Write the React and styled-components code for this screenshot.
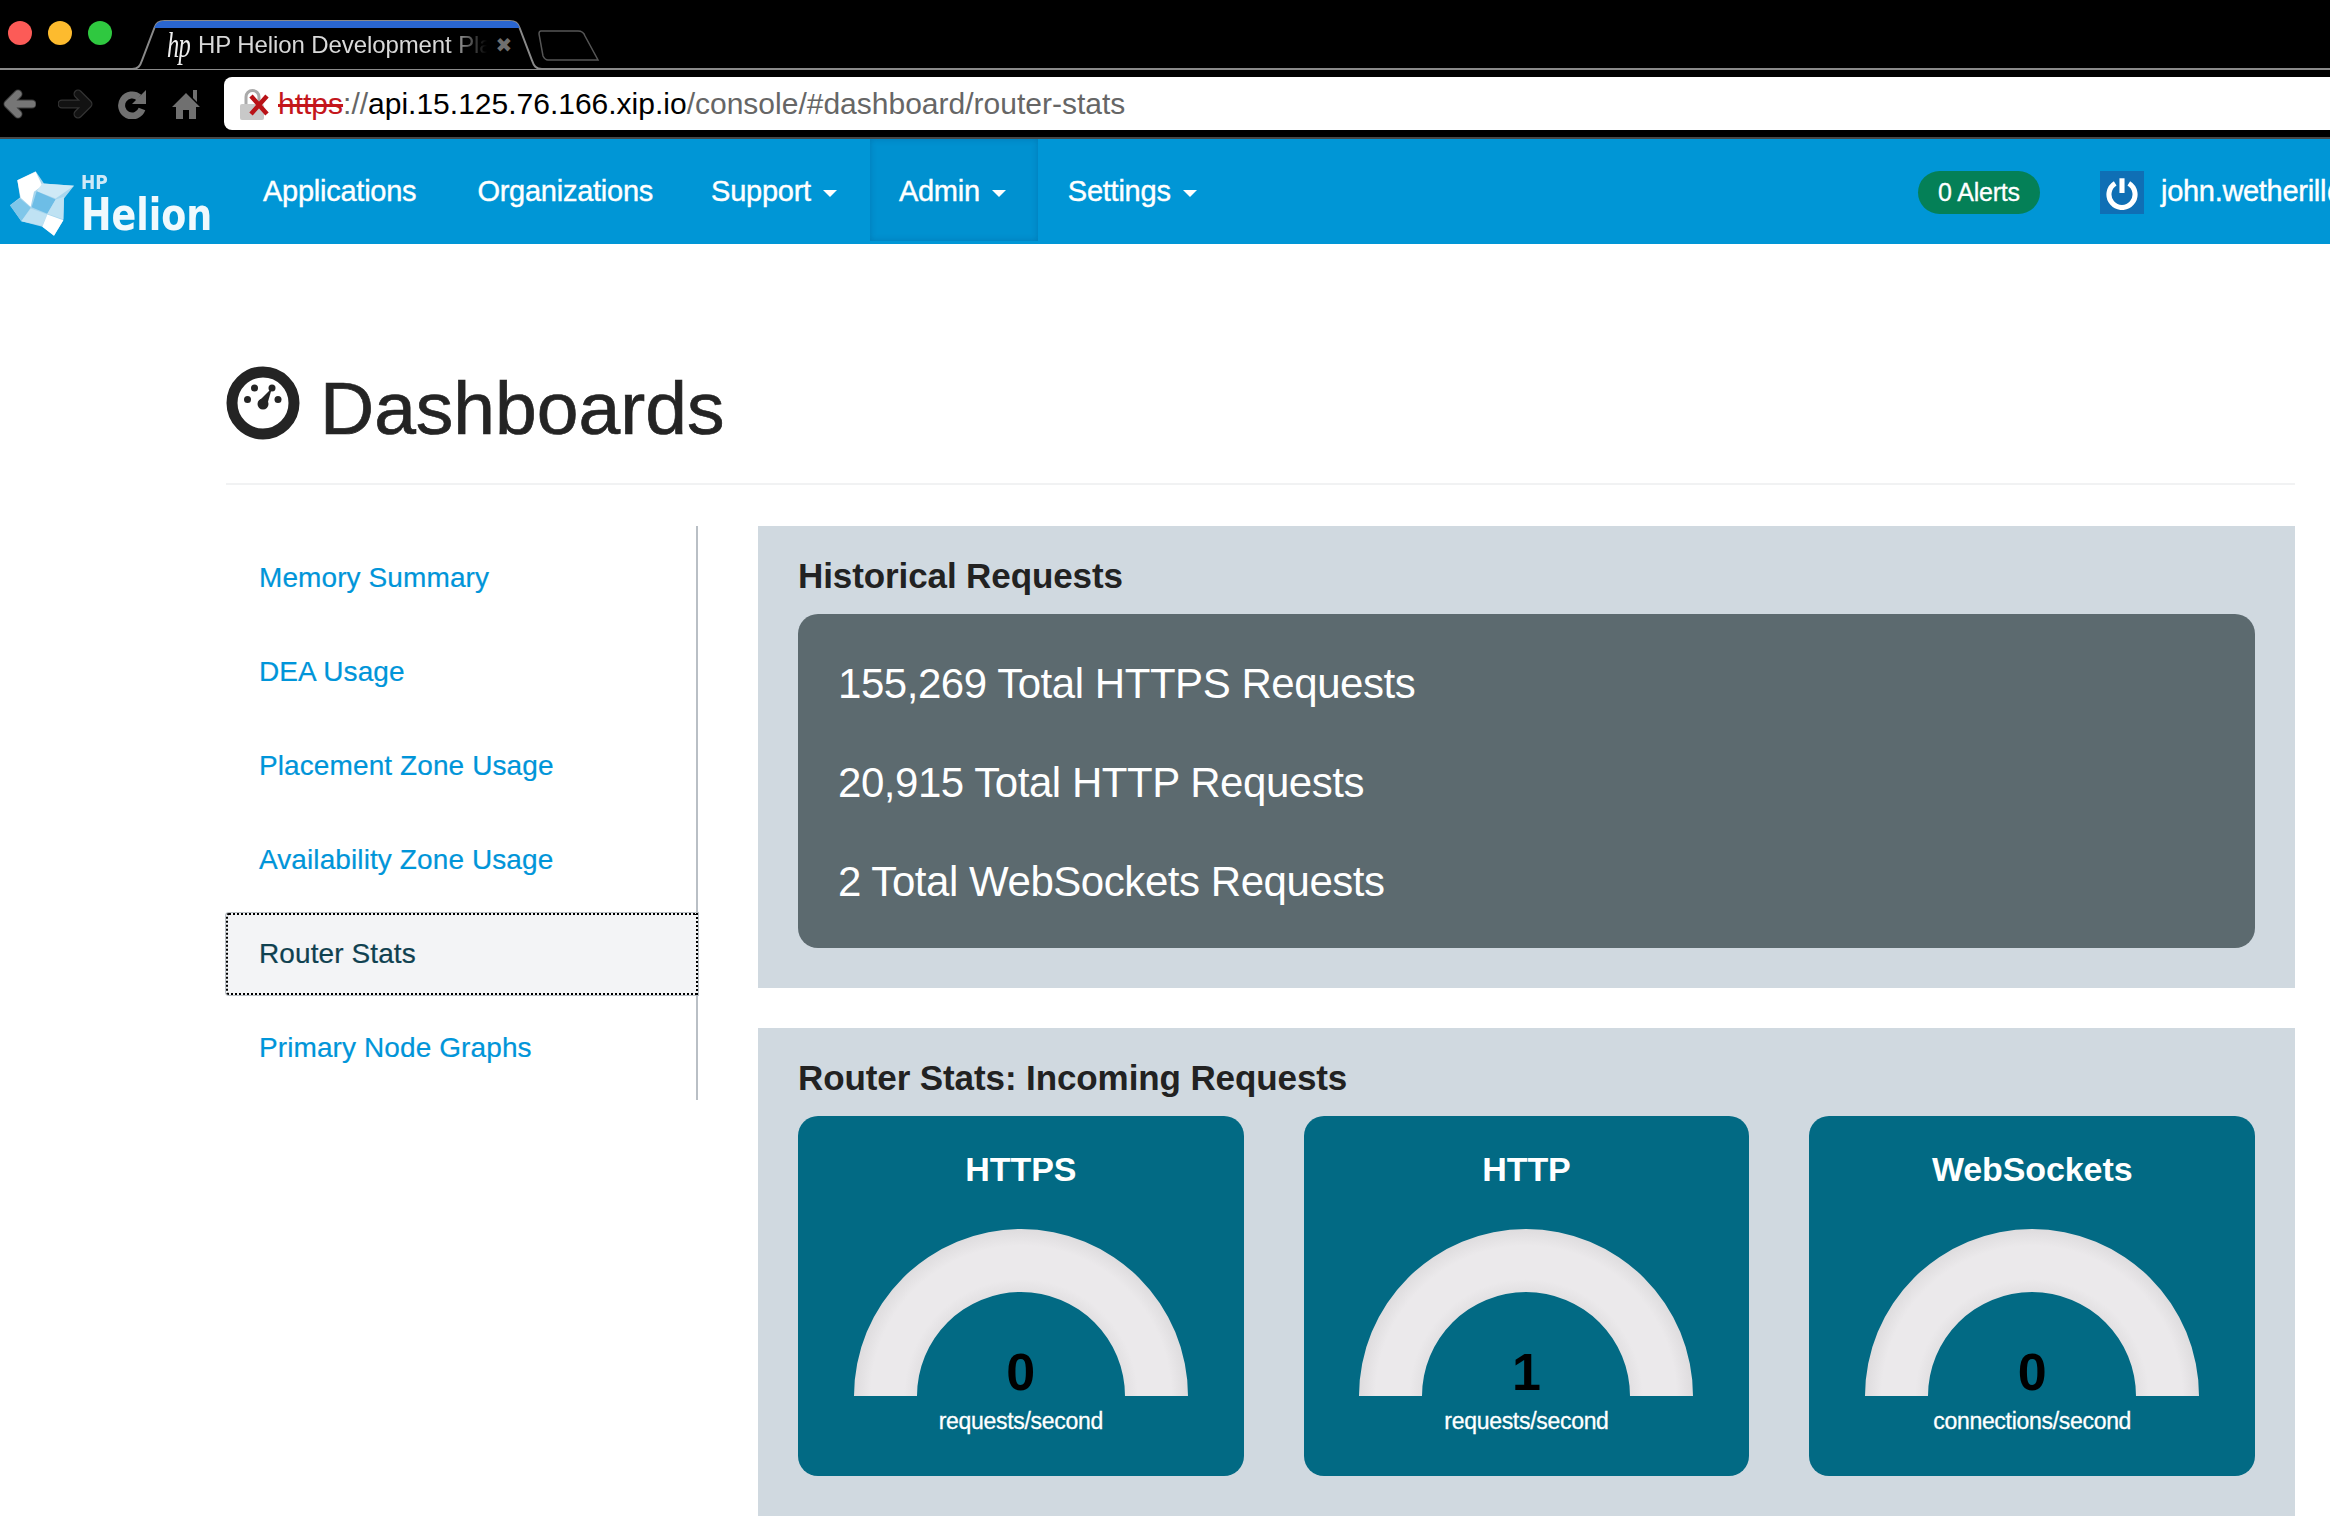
import styled, { createGlobalStyle } from 'styled-components'

const GlobalStyle = createGlobalStyle`
  html, body {
    margin: 0;
    padding: 0;
    background: #fff;
    font-family: "Liberation Sans", Arial, sans-serif;
    overflow: hidden;
  }
  * { box-sizing: border-box; }
`

const MENU = [
  { label: 'Memory Summary' },
  { label: 'DEA Usage' },
  { label: 'Placement Zone Usage' },
  { label: 'Availability Zone Usage' },
  { label: 'Router Stats', active: true },
  { label: 'Primary Node Graphs' },
]

const GAUGES = [
  { title: 'HTTPS', value: 0, unit: 'requests/second' },
  { title: 'HTTP', value: 1, unit: 'requests/second' },
  { title: 'WebSockets', value: 0, unit: 'connections/second' },
]

const BrowserChrome = () => (
  <Chrome>
    <TabStrip>
      <Lights>
        <Light $color="#fc5b57" />
        <Light $color="#fdbb2e" />
        <Light $color="#2fc840" />
      </Lights>
      <Tab>
        <TabShape viewBox="0 0 408 50" preserveAspectRatio="none">
          <path d="M0 49 H2 C8 49 10 46 12 40 L24 8 C26 3 28 1 34 1 H374 C380 1 382 3 384 8 L396 40 C398 46 400 49 406 49 H408" fill="#000" stroke="#8a8a8a" strokeWidth="2" />
          <path d="M24 8 C26 3 28 1 34 1 H374 C380 1 382 3 384 8 Z" fill="#2a66d0" />
        </TabShape>
        <HpMark>hp</HpMark>
        <TabTitle>HP Helion Development Pla</TabTitle>
        <TabClose>✖</TabClose>
      </Tab>
      <NewTab viewBox="0 0 62 32">
        <path d="M3 1 H40 C44 1 46 3 47 6 L60 30 H10 C7 30 6 28 5 26 L1 4 C1 2 2 1 3 1 Z" fill="none" stroke="#555" strokeWidth="1.5" />
      </NewTab>
    </TabStrip>
    <UrlRow>
      <NavIcons>
        <ChromeIcon viewBox="0 0 33 30" $w={33}>
          <path d="M29 15 H7 M15 5 L5 15 L15 25" fill="none" stroke="#3a3a3a" strokeWidth="9" strokeLinecap="round" strokeLinejoin="round" />
          <path d="M29 15 H7 M15 5 L5 15 L15 25" fill="none" stroke="#767676" strokeWidth="7" strokeLinecap="round" strokeLinejoin="round" />
        </ChromeIcon>
        <ChromeIcon viewBox="0 0 37 30" $w={37}>
          <path d="M4 15 H28 M20 5 L30 15 L20 25" fill="none" stroke="#333" strokeWidth="9" strokeLinecap="round" strokeLinejoin="round" />
          <path d="M4 15 H28 M20 5 L30 15 L20 25" fill="none" stroke="#121212" strokeWidth="6.5" strokeLinecap="round" strokeLinejoin="round" />
        </ChromeIcon>
        <ChromeIcon viewBox="0 0 33 30" $w={33}>
          <path d="M22 8.5 A10.5 10.5 0 1 0 25 20" fill="none" stroke="#707070" strokeWidth="7" />
          <path d="M29 1 V15 H15 Z" fill="#707070" />
        </ChromeIcon>
        <ChromeIcon viewBox="0 0 28 30" $w={28}>
          <path d="M14 4 L28 18 H24 V30 H17 V21 H11 V30 H4 V18 H0 Z M21 1 H25 V13 L21 9 Z" fill="#707070" />
        </ChromeIcon>
      </NavIcons>
      <UrlBar>
        <LockIcon viewBox="0 0 30 34">
          <path d="M6 18 V10 A6.5 6.5 0 0 1 19 10 V18" fill="none" stroke="#aaa" strokeWidth="3" />
          <rect x="0" y="17" width="24" height="16" rx="2" fill="#c8c8c8" />
          <path d="M11 9 L27 27 M27 9 L11 27" stroke="#b91217" strokeWidth="4.5" />
        </LockIcon>
        <UrlText>
          <Scheme>https</Scheme>
          <UrlDim>://</UrlDim>
          <span>api.15.125.76.166.xip.io</span>
          <UrlDim>/console/#dashboard/router-stats</UrlDim>
        </UrlText>
      </UrlBar>
    </UrlRow>
  </Chrome>
)

const HelionLogo = () => (
  <Logo>
    <LogoMark width="66" height="67" viewBox="25 65 198 200">
      <path d="M105 68 L130 105 L220 112 L190 150 L188 215 L160 262 L125 235 L62 218 L28 170 L58 147 L50 95 Z" fill="#a8d6ee" />
      <path d="M50 95 L105 70 L125 112 L100 130 L90 175 L60 148 Z" fill="#ffffff" />
      <path d="M125 105 L220 112 L165 150 L108 128 Z" fill="#cfe9f6" />
      <path d="M108 128 L165 153 L140 196 L93 176 Z" fill="#6dbde6" />
      <path d="M165 153 L190 145 L188 212 L140 196 Z" fill="#bfe2f3" />
      <path d="M28 170 L58 150 L90 178 L62 218 Z" fill="#7fc6e9" />
      <path d="M90 180 L140 198 L125 232 L62 218 Z" fill="#bfe2f3" />
      <path d="M140 198 L188 215 L160 262 L125 235 Z" fill="#ffffff" />
    </LogoMark>
    <LogoWords>
      <LogoHp>HP</LogoHp>
      <LogoName>Helion</LogoName>
    </LogoWords>
  </Logo>
)

const TopNav = () => (
  <NavBar>
    <HelionLogo />
    <NavItem $left={30} $right={31}>Applications</NavItem>
    <NavItem $left={30} $right={28}>Organizations</NavItem>
    <NavItem $left={30} $right={33}>Support<Caret /></NavItem>
    <NavItem $left={29} $right={32} $active>Admin<Caret /></NavItem>
    <NavItem $left={30} $right={30}>Settings<Caret /></NavItem>
    <NavRight>
      <AlertBadge>0 Alerts</AlertBadge>
      <PowerBox>
        <svg width="34" height="34" viewBox="0 0 30 30">
          <path d="M9 6.5 A11.5 11.5 0 1 0 21 6.5" fill="none" stroke="#fff" strokeWidth="4.5" />
          <path d="M15 2 V15" stroke="#fff" strokeWidth="4.5" />
        </svg>
      </PowerBox>
      <UserName>john.wetherill@hp.com</UserName>
    </NavRight>
  </NavBar>
)

const GaugeDial = () => (
  <svg width="334" height="167" viewBox="0 0 334 167">
    <defs>
      <radialGradient id="dial" gradientUnits="userSpaceOnUse" cx="167" cy="167" r="167">
        <stop offset="0.62" stopColor="#e2e0e2" />
        <stop offset="0.7" stopColor="#ebe9eb" />
        <stop offset="0.9" stopColor="#ebe9eb" />
        <stop offset="1" stopColor="#dedcde" />
      </radialGradient>
    </defs>
    <path d="M0 167 A167 167 0 0 1 334 167 H271 A104 104 0 0 0 63 167 Z" fill="url(#dial)" />
  </svg>
)

const GaugeCard = ({ title, value, unit }) => (
  <Card>
    <CardTitle>{title}</CardTitle>
    <DialWrap>
      <GaugeDial />
      <GaugeValue>{value}</GaugeValue>
    </DialWrap>
    <GaugeUnit>{unit}</GaugeUnit>
  </Card>
)

const App = () => (
  <>
    <GlobalStyle />
    <BrowserChrome />
    <TopNav />
    <Page>
      <PageHeader>
        <svg width="74" height="74" viewBox="0 0 74 74">
          <circle cx="37" cy="37" r="31" fill="none" stroke="#242424" strokeWidth="11" />
          <circle cx="21.5" cy="33.5" r="3.5" fill="#242424" />
          <circle cx="28.5" cy="22" r="3.5" fill="#242424" />
          <circle cx="46" cy="22" r="3.5" fill="#242424" />
          <circle cx="52" cy="33.5" r="3.5" fill="#242424" />
          <circle cx="37" cy="38" r="5.5" fill="#242424" />
          <path d="M33 35 L46 22 L41 39 Z" fill="#242424" />
        </svg>
        <PageTitle>Dashboards</PageTitle>
      </PageHeader>
      <Columns>
        <SideMenu>
          {MENU.map((item) => (
            <MenuItem key={item.label} $active={item.active}>{item.label}</MenuItem>
          ))}
        </SideMenu>
        <Panels>
          <Panel>
            <PanelTitle>Historical Requests</PanelTitle>
            <TotalsBox>
              <TotalRow>155,269 Total HTTPS Requests</TotalRow>
              <TotalRow>20,915 Total HTTP Requests</TotalRow>
              <TotalRow>2 Total WebSockets Requests</TotalRow>
            </TotalsBox>
          </Panel>
          <Panel>
            <PanelTitle>Router Stats: Incoming Requests</PanelTitle>
            <CardGrid>
              {GAUGES.map((gauge) => (
                <GaugeCard key={gauge.title} {...gauge} />
              ))}
            </CardGrid>
          </Panel>
        </Panels>
      </Columns>
    </Page>
  </>
)

const Chrome = styled.div`
  background: #000;
  height: 139px;
  overflow: hidden;
  border-bottom: 2px solid #4a4a4a;
`

const TabStrip = styled.div`
  height: 70px;
  display: flex;
  align-items: flex-start;
  border-bottom: 2px solid #8a8a8a;
`

const Lights = styled.div`
  display: flex;
  gap: 16px;
  padding: 21px 0 0 8px;
  width: 130px;
  flex: none;
`

const Light = styled.span`
  width: 24px;
  height: 24px;
  border-radius: 50%;
  background: ${(p) => p.$color};
`

const Tab = styled.div`
  position: relative;
  width: 414px;
  height: 50px;
  margin-top: 20px;
  padding: 0 0 0 37px;
  flex: none;
  display: flex;
  align-items: center;
  color: #d9d9d9;
`

const TabShape = styled.svg`
  position: absolute;
  left: 0;
  top: 0;
  width: 100%;
  height: 100%;
`

const HpMark = styled.span`
  position: relative;
  font: italic 36px/36px "Liberation Serif", serif;
  color: #eee;
  width: 31px;
  transform: scaleX(0.68);
  transform-origin: left center;
  letter-spacing: -1px;
`

const TabTitle = styled.span`
  position: relative;
  flex: none;
  font-size: 24px;
  letter-spacing: -0.1px;
  white-space: nowrap;
  -webkit-mask-image: linear-gradient(to right, #000 84%, transparent 98%);
`

const TabClose = styled.span`
  position: relative;
  margin-left: 3px;
  font: 20px "DejaVu Sans", sans-serif;
  color: #6f6f6f;
`

const NewTab = styled.svg`
  width: 62px;
  height: 32px;
  margin: 30px 0 0 -6px;
  flex: none;
`

const UrlRow = styled.div`
  height: 67px;
  display: flex;
  align-items: flex-start;
`

const NavIcons = styled.div`
  width: 224px;
  height: 67px;
  flex: none;
  display: flex;
  align-items: center;
  gap: 22px;
  padding-left: 3px;
`

const ChromeIcon = styled.svg`
  width: ${(p) => p.$w}px;
  height: 30px;
  flex: none;
`

const UrlBar = styled.div`
  flex: 1;
  margin-top: 7px;
  margin-right: -20px;
  height: 53px;
  background: #fff;
  border-radius: 8px;
  display: flex;
  align-items: center;
  padding-left: 16px;
  gap: 8px;
`

const LockIcon = styled.svg`
  width: 30px;
  height: 34px;
`

const UrlText = styled.div`
  font-size: 30px;
  color: #000;
  white-space: nowrap;
`

const Scheme = styled.span`
  color: #c4161c;
  text-decoration: line-through;
`

const UrlDim = styled.span`
  color: #666;
`

const NavBar = styled.nav`
  height: 105px;
  background: #0096d6;
  display: flex;
  color: #fff;
  overflow: hidden;
`

const Logo = styled.div`
  width: 233px;
  flex: none;
  display: flex;
  align-items: center;
  gap: 6px;
  padding: 0 0 0 9px;
  filter: blur(0.6px);
`

const LogoMark = styled.svg`
  margin-top: 24px;
  flex: none;
`

const LogoWords = styled.div`
  display: flex;
  flex-direction: column;
  margin-top: 29px;
`

const LogoHp = styled.span`
  font: bold 19px/22px "DejaVu Sans Condensed", "DejaVu Sans", sans-serif;
  color: #cfe9f7;
`

const LogoName = styled.span`
  font: bold 45px/52px "DejaVu Sans Condensed", "DejaVu Sans", sans-serif;
  margin-top: -4px;
  color: #f0f9fd;
  transform: scaleX(0.9);
  transform-origin: left center;
`

const NavItem = styled.a`
  height: 102px;
  padding: 2px ${(p) => p.$right}px 0 ${(p) => p.$left}px;
  display: flex;
  align-items: center;
  flex: none;
  font-size: 29px;
  letter-spacing: -0.25px;
  -webkit-text-stroke: 0.4px #fff;
  white-space: nowrap;
  background: ${(p) => (p.$active ? '#0091d0' : 'transparent')};
  box-shadow: ${(p) => (p.$active ? 'inset 0 0 6px rgba(0,70,120,.3)' : 'none')};
`

const Caret = styled.span`
  width: 0;
  height: 0;
  margin-left: 12px;
  margin-top: 4px;
  border-left: 7px solid transparent;
  border-right: 7px solid transparent;
  border-top: 7px solid #fff;
`

const NavRight = styled.div`
  margin-left: auto;
  display: flex;
  align-items: center;
  flex: none;
  width: 412px;
  height: 103px;
  padding-top: 4px;
`

const AlertBadge = styled.span`
  width: 122px;
  height: 43px;
  border-radius: 22px;
  background: #048057;
  font-size: 25px;
  letter-spacing: -0.2px;
  -webkit-text-stroke: 0.3px #fff;
  display: flex;
  align-items: center;
  justify-content: center;
  flex: none;
`

const PowerBox = styled.span`
  width: 44px;
  height: 43px;
  margin-left: 60px;
  background: #0f6fb5;
  display: flex;
  align-items: center;
  justify-content: center;
  flex: none;
`

const UserName = styled.span`
  margin: -2px 0 0 17px;
  font-size: 29px;
  letter-spacing: -0.3px;
  -webkit-text-stroke: 0.4px #fff;
  white-space: nowrap;
`

const Page = styled.main`
  padding: 0 35px 0 226px;
`

const PageHeader = styled.header`
  height: 241px;
  display: flex;
  align-items: center;
  gap: 20px;
  padding-top: 78px;
  border-bottom: 2px solid #f1f2f3;
`

const PageTitle = styled.h1`
  margin: 11px 0 0;
  font-size: 75px;
  font-weight: 400;
  color: #242424;
  -webkit-text-stroke: 0.7px #242424;
`

const Columns = styled.div`
  display: flex;
  gap: 60px;
  margin-top: 41px;
  align-items: flex-start;
`

const SideMenu = styled.ul`
  width: 472px;
  flex: none;
  margin: 0;
  padding: 11px 0;
  list-style: none;
  border-right: 2px solid #b9bfc5;
  display: flex;
  flex-direction: column;
  gap: 12px;
`

const MenuItem = styled.li`
  height: 82px;
  margin-right: -2px;
  padding-left: 33px;
  display: flex;
  align-items: center;
  font-size: 28px;
  letter-spacing: 0.1px;
  -webkit-text-stroke: 0.2px currentColor;
  border-radius: 3px 0 0 3px;
  color: ${(p) => (p.$active ? '#0f4150' : '#0095d9')};
  background: ${(p) => (p.$active ? '#f3f4f6' : 'transparent')};
  outline: ${(p) => (p.$active ? '2px dotted #000' : 'none')};
  outline-offset: -2px;
  box-shadow: ${(p) => (p.$active ? '0 0 0 1px #b9bfc5' : 'none')};
`

const Panels = styled.div`
  flex: 1;
  display: flex;
  flex-direction: column;
  gap: 40px;
`

const Panel = styled.section`
  background: #d0d9e0;
  padding: 25px 40px 40px;
`

const PanelTitle = styled.h2`
  margin: 0 0 14px;
  font-size: 35px;
  line-height: 49px;
  font-weight: 700;
  letter-spacing: -0.1px;
  color: #222;
`

const TotalsBox = styled.div`
  height: 334px;
  background: #5c6a6f;
  border-radius: 20px;
  padding: 21px 40px 17px;
  display: flex;
  flex-direction: column;
  justify-content: space-between;
`

const TotalRow = styled.div`
  height: 98px;
  display: flex;
  align-items: center;
  font-size: 42px;
  letter-spacing: -0.45px;
  color: #fff;
`

const CardGrid = styled.div`
  display: grid;
  grid-template-columns: repeat(3, 1fr);
  gap: 60px;
`

const Card = styled.article`
  height: 360px;
  background: #026a84;
  border-radius: 20px;
  display: flex;
  flex-direction: column;
  align-items: center;
  color: #fff;
`

const CardTitle = styled.h3`
  margin: 33px 0 40px;
  font-size: 34px;
  line-height: 40px;
  font-weight: 700;
  letter-spacing: -0.1px;
`

const DialWrap = styled.div`
  position: relative;
  height: 167px;
`

const GaugeValue = styled.div`
  position: absolute;
  left: 0;
  right: 0;
  bottom: -6px;
  text-align: center;
  font-size: 52px;
  line-height: 60px;
  font-weight: 700;
  color: #000;
`

const GaugeUnit = styled.div`
  margin-top: 8px;
  font-size: 23px;
  line-height: 34px;
  letter-spacing: -0.3px;
  -webkit-text-stroke: 0.3px #fff;
`

export default App
